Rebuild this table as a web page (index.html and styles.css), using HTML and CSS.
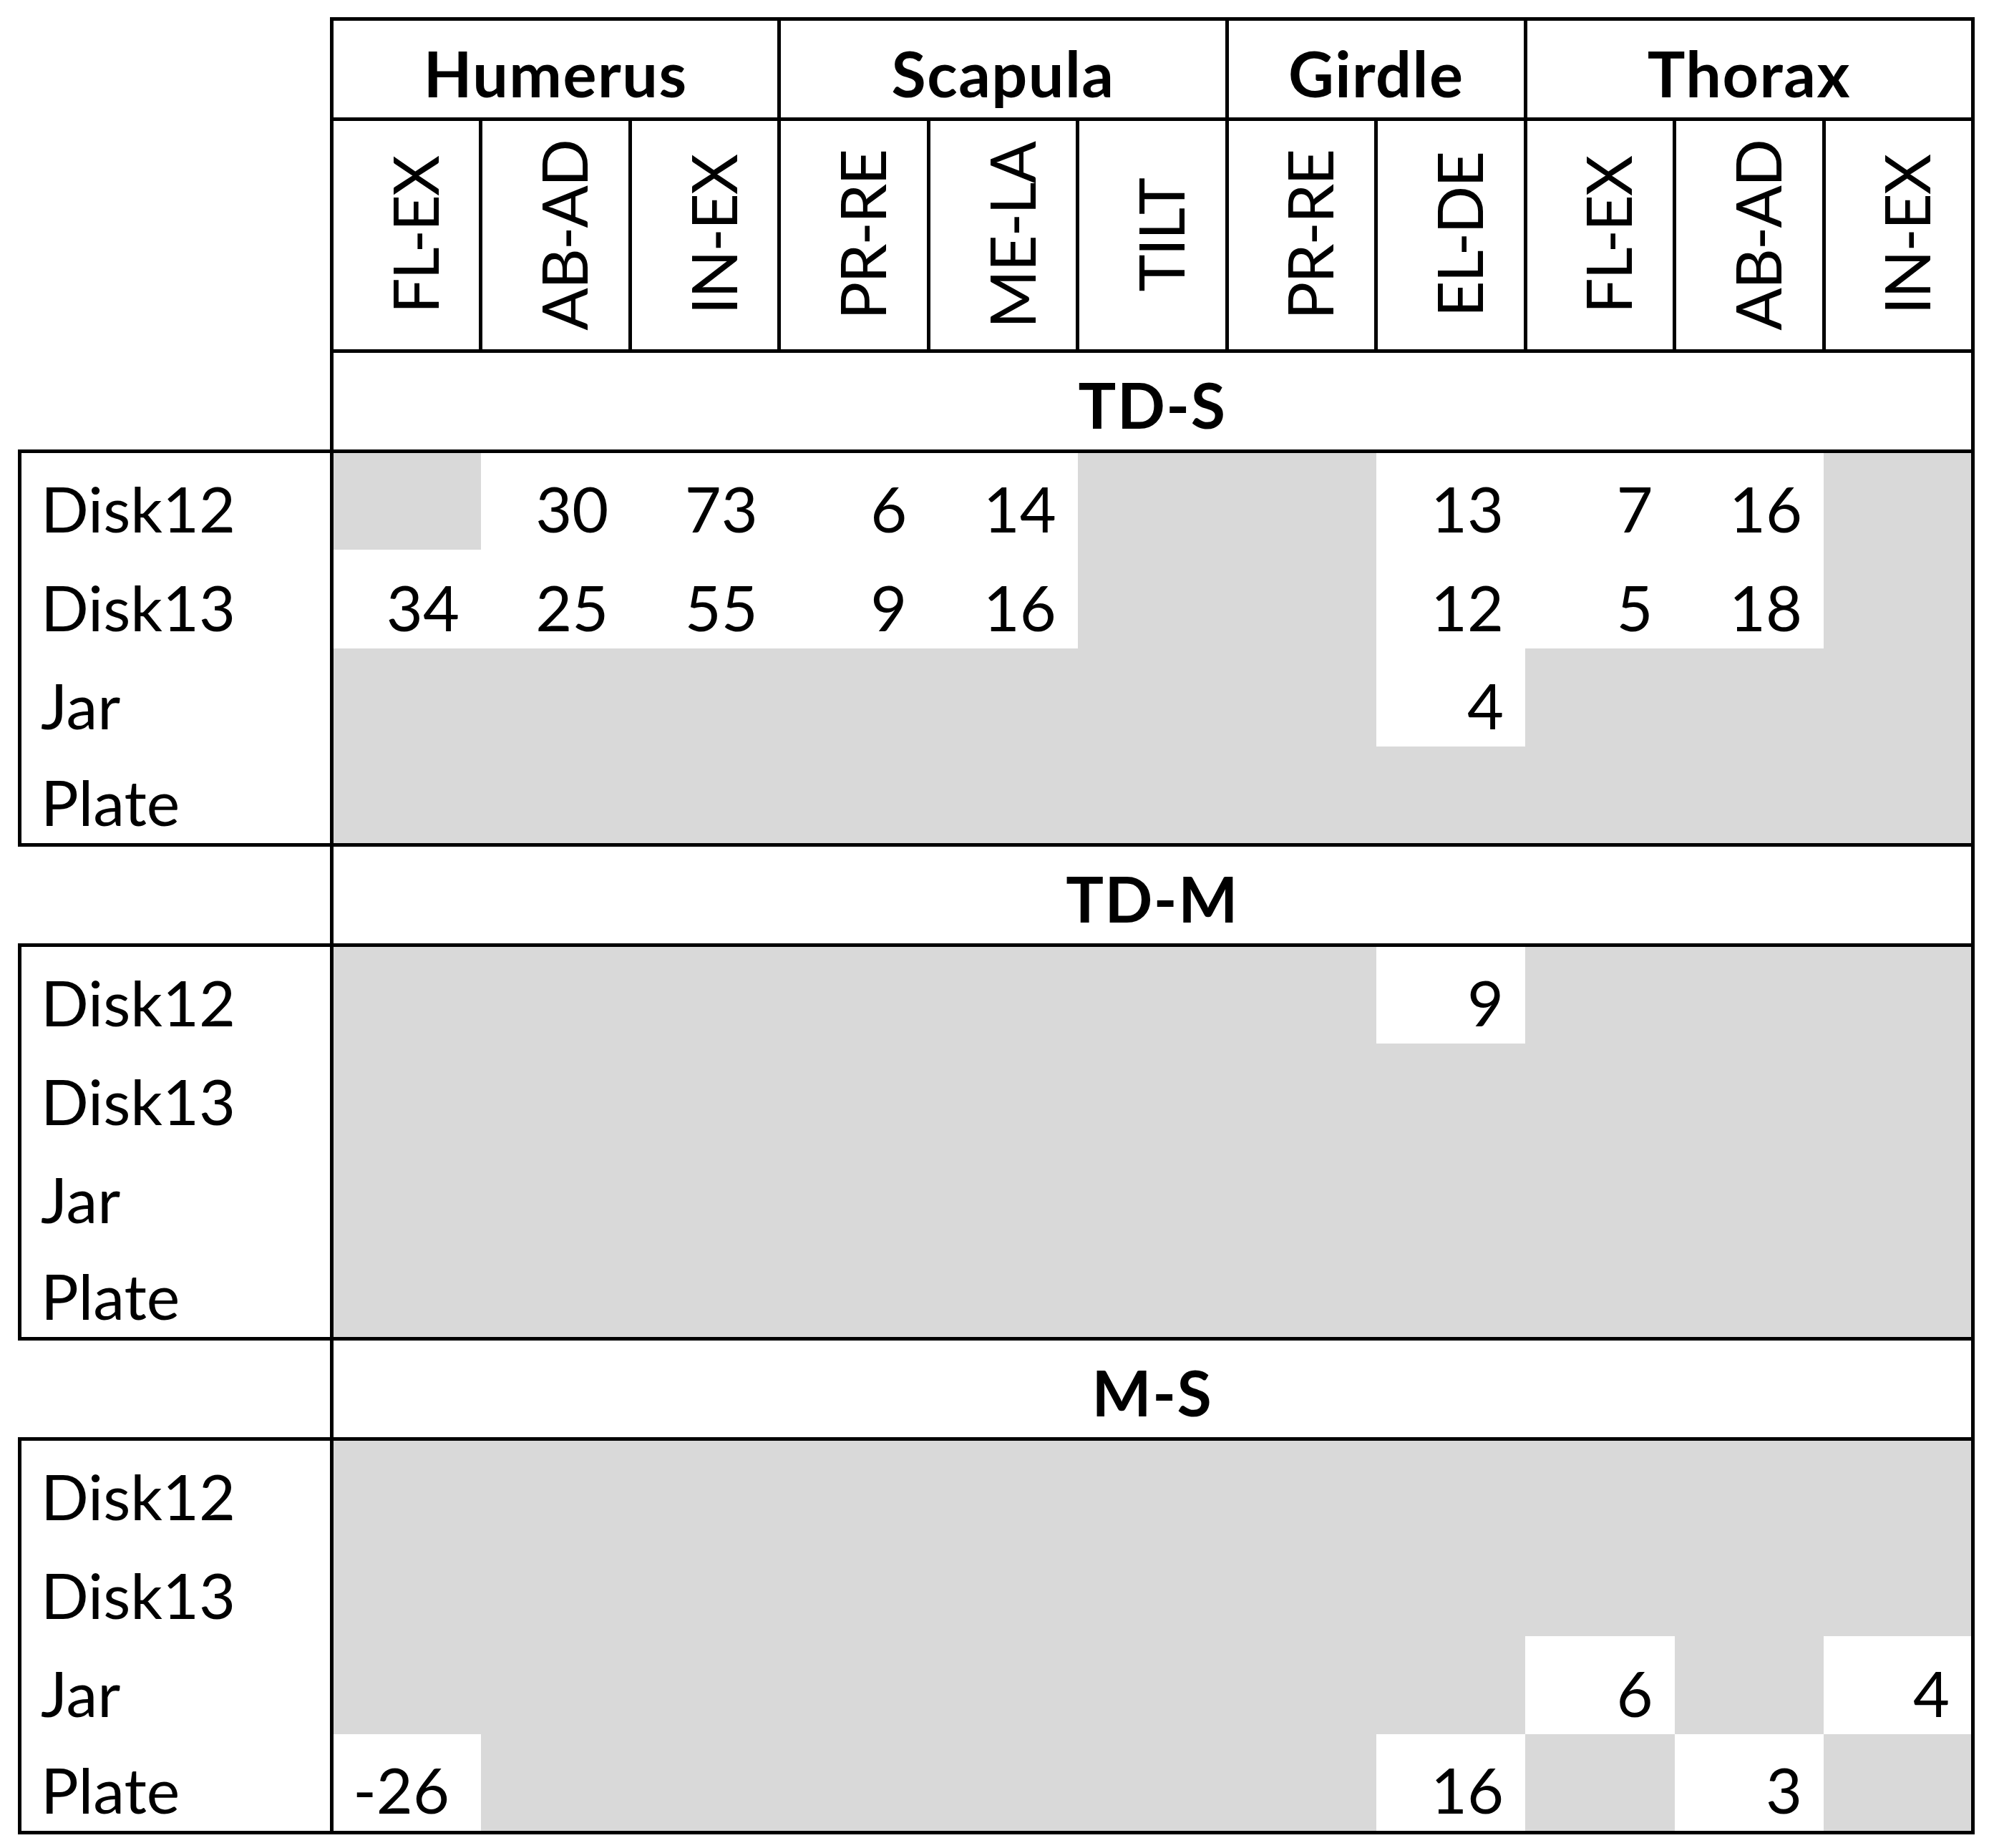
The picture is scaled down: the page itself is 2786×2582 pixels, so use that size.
FILE: index.html
```html
<!DOCTYPE html>
<html>
<head>
<meta charset="utf-8">
<title>Motion table</title>
<link rel="stylesheet" href="styles.css">
</head>
<body>
<table class="grid">
  <colgroup><col class="c-label"><col span="11" class="c-data"></colgroup>
  <thead>
    <tr class="r-group">
      <td class="corner"></td>
      <th colspan="3" class="grp">Humerus</th>
      <th colspan="3" class="grp">Scapula</th>
      <th colspan="2" class="grp">Girdle</th>
      <th colspan="3" class="grp">Thorax</th>
    </tr>
    <tr class="r-sub">
      <td class="corner"></td>
      <th class="sub"><span class="vt">FL-EX</span></th>
      <th class="sub"><span class="vt">AB-AD</span></th>
      <th class="sub"><span class="vt">IN-EX</span></th>
      <th class="sub"><span class="vt">PR-RE</span></th>
      <th class="sub"><span class="vt">ME-LA</span></th>
      <th class="sub"><span class="vt">TILT</span></th>
      <th class="sub"><span class="vt">PR-RE</span></th>
      <th class="sub"><span class="vt">EL-DE</span></th>
      <th class="sub"><span class="vt">FL-EX</span></th>
      <th class="sub"><span class="vt">AB-AD</span></th>
      <th class="sub"><span class="vt">IN-EX</span></th>
    </tr>
  </thead>
  <tbody>
    <tr class="r-sec"><td class="corner"></td><th colspan="11" class="sec">TD-S</th></tr>
    <tr class="r-data first"><th class="lbl">Disk12</th><td class="g"></td><td>30</td><td>73</td><td>6</td><td>14</td><td class="g"></td><td class="g"></td><td>13</td><td>7</td><td>16</td><td class="g"></td></tr>
    <tr class="r-data"><th class="lbl">Disk13</th><td>34</td><td>25</td><td>55</td><td>9</td><td>16</td><td class="g"></td><td class="g"></td><td>12</td><td>5</td><td>18</td><td class="g"></td></tr>
    <tr class="r-data"><th class="lbl">Jar</th><td class="g"></td><td class="g"></td><td class="g"></td><td class="g"></td><td class="g"></td><td class="g"></td><td class="g"></td><td>4</td><td class="g"></td><td class="g"></td><td class="g"></td></tr>
    <tr class="r-data last"><th class="lbl">Plate</th><td class="g"></td><td class="g"></td><td class="g"></td><td class="g"></td><td class="g"></td><td class="g"></td><td class="g"></td><td class="g"></td><td class="g"></td><td class="g"></td><td class="g"></td></tr>

    <tr class="r-sec"><td class="corner"></td><th colspan="11" class="sec">TD-M</th></tr>
    <tr class="r-data first"><th class="lbl">Disk12</th><td class="g"></td><td class="g"></td><td class="g"></td><td class="g"></td><td class="g"></td><td class="g"></td><td class="g"></td><td>9</td><td class="g"></td><td class="g"></td><td class="g"></td></tr>
    <tr class="r-data"><th class="lbl">Disk13</th><td class="g"></td><td class="g"></td><td class="g"></td><td class="g"></td><td class="g"></td><td class="g"></td><td class="g"></td><td class="g"></td><td class="g"></td><td class="g"></td><td class="g"></td></tr>
    <tr class="r-data"><th class="lbl">Jar</th><td class="g"></td><td class="g"></td><td class="g"></td><td class="g"></td><td class="g"></td><td class="g"></td><td class="g"></td><td class="g"></td><td class="g"></td><td class="g"></td><td class="g"></td></tr>
    <tr class="r-data last"><th class="lbl">Plate</th><td class="g"></td><td class="g"></td><td class="g"></td><td class="g"></td><td class="g"></td><td class="g"></td><td class="g"></td><td class="g"></td><td class="g"></td><td class="g"></td><td class="g"></td></tr>

    <tr class="r-sec"><td class="corner"></td><th colspan="11" class="sec">M-S</th></tr>
    <tr class="r-data first"><th class="lbl">Disk12</th><td class="g"></td><td class="g"></td><td class="g"></td><td class="g"></td><td class="g"></td><td class="g"></td><td class="g"></td><td class="g"></td><td class="g"></td><td class="g"></td><td class="g"></td></tr>
    <tr class="r-data"><th class="lbl">Disk13</th><td class="g"></td><td class="g"></td><td class="g"></td><td class="g"></td><td class="g"></td><td class="g"></td><td class="g"></td><td class="g"></td><td class="g"></td><td class="g"></td><td class="g"></td></tr>
    <tr class="r-data"><th class="lbl">Jar</th><td class="g"></td><td class="g"></td><td class="g"></td><td class="g"></td><td class="g"></td><td class="g"></td><td class="g"></td><td class="g"></td><td>6</td><td class="g"></td><td>4</td></tr>
    <tr class="r-data last"><th class="lbl">Plate</th><td class="neg">-26</td><td class="g"></td><td class="g"></td><td class="g"></td><td class="g"></td><td class="g"></td><td class="g"></td><td>16</td><td class="g"></td><td>3</td><td class="g"></td></tr>
  </tbody>
</table>
</body>
</html>
```

FILE: styles.css
```css
html, body {
  margin: 0;
  padding: 0;
  background: #ffffff;
}

body {
  padding: 24px 0 0 25px;
}

.grid {
  border-collapse: collapse;
  table-layout: fixed;
  width: 2734px;
  font-family: Lato, "Open Sans", sans-serif;
  font-size: 88px;
  color: #000000;
}

.c-label {
  width: 436px;
}

.grid td,
.grid th {
  padding: 0;
  line-height: 1;
  vertical-align: bottom;
}

.r-group { height: 140px; }
.r-sub { height: 324px; }
.r-sec { height: 140px; }
.r-data { height: 137.5px; }

.grid .corner {
  border: none;
}

.grid .grp,
.grid .sec {
  font-weight: 700;
  letter-spacing: 1.5px;
  text-align: center;
  border: 5px solid #000000;
}

.grid .grp {
  padding-bottom: 18px;
}

.grid .sec {
  padding-bottom: 19px;
}

.grid .sub {
  border: 5px solid #000000;
  vertical-align: middle;
  text-align: center;
  font-weight: 400;
  font-size: 0;
  line-height: 0;
  padding-left: 22px;
}

.grid .vt {
  display: inline-block;
  vertical-align: middle;
  writing-mode: vertical-rl;
  transform: rotate(180deg);
  white-space: nowrap;
  font-size: 88px;
  line-height: 1;
  letter-spacing: -2px;
}

.grid .lbl {
  text-align: left;
  font-weight: 400;
  border-left: 5px solid #000000;
  border-right: 5px solid #000000;
  padding-left: 27px;
  padding-bottom: 14px;
}

.grid .r-data td {
  text-align: right;
  padding-right: 30px;
  padding-bottom: 14px;
  background: #ffffff;
}

.grid .r-data td.g {
  background: #d9d9d9;
}

.grid .r-data td.neg {
  padding-right: 44px;
}

.grid .r-data td:last-child {
  border-right: 5px solid #000000;
}

.grid .r-data.first > * {
  border-top: 5px solid #000000;
}

.grid .r-data.last > * {
  border-bottom: 5px solid #000000;
}
```
